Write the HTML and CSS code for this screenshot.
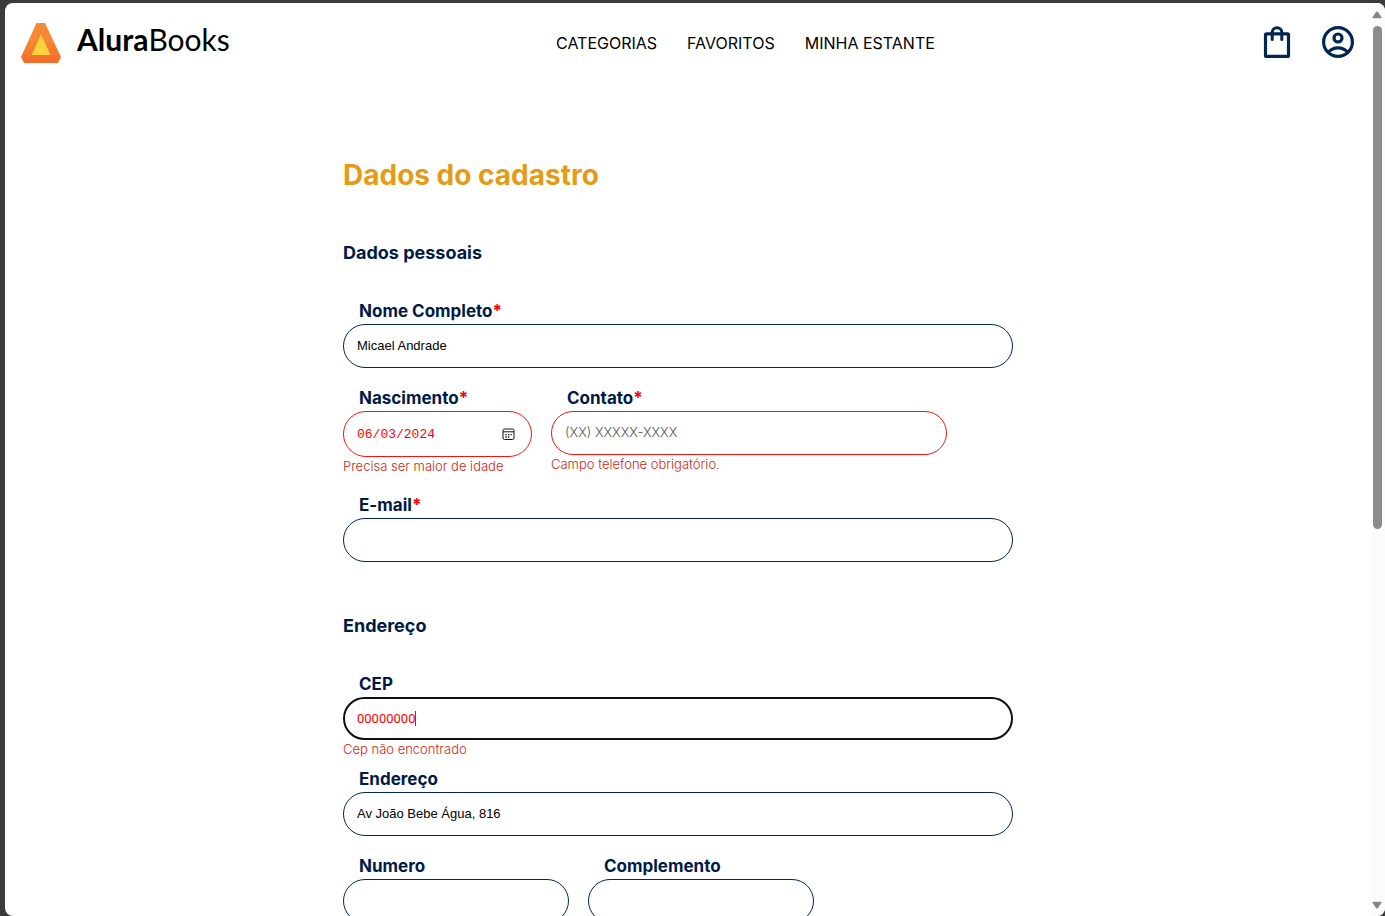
FILE: index.html
```html
<!DOCTYPE html>
<html lang="pt-BR">
<head>
<meta charset="utf-8">
<meta name="viewport" content="width=device-width, initial-scale=1">
<title>AluraBooks</title>
<link rel="stylesheet" href="styles.css">
</head>
<body>
<div class="window">
  <div class="page">
    <header class="header">
      <a class="logo" href="#">
        <svg class="logo-mark" viewBox="0 0 40 40" aria-hidden="true">
          <defs>
            <linearGradient id="flame" x1="0" y1="0" x2="0" y2="1">
              <stop offset="0.4" stop-color="#f68a34"/>
              <stop offset="1" stop-color="#f56a2a"/>
            </linearGradient>
          </defs>
          <path d="M15.500 0h8.500L40 34l-3 6H3l-3-6z" fill="url(#flame)"/>
          <path d="M20 11.500 29.500 32h-19z" fill="#fad23c"/>
        </svg>
        <span class="logo-text"><b>Alura</b>Books</span>
      </a>
      <nav class="nav">
        <a href="#">CATEGORIAS</a>
        <a href="#">FAVORITOS</a>
        <a href="#">MINHA ESTANTE</a>
      </nav>
      <div class="actions">
        <button type="button" class="icon-button" aria-label="Sacola">
          <svg viewBox="0 0 32 32" fill="none" stroke="#002652" stroke-width="3.200" stroke-linejoin="round" stroke-linecap="round">
            <rect x="4.500" y="7.800" width="23" height="22.600" rx="1"/>
            <path d="M11.200 13.500V6.500a4.800 4.800 0 0 1 9.600 0v7" stroke-width="3"/>
          </svg>
        </button>
        <button type="button" class="icon-button" aria-label="Minha conta">
          <svg viewBox="0 0 32 32" fill="none" stroke="#002652" stroke-width="3.200">
            <circle cx="16" cy="16" r="14.400"/>
            <circle cx="16" cy="12" r="4"/>
            <path d="M6.500 26c5-5.600 14-5.600 19 0"/>
          </svg>
        </button>
      </div>
    </header>

    <main class="main">
      <form class="form">
        <h1 class="title">Dados do cadastro</h1>

        <h2 class="section-title">Dados pessoais</h2>
        <div class="row">
          <div class="field grow">
            <label for="nome">Nome Completo<span class="required">*</span></label>
            <input class="box" id="nome" type="text" value="Micael Andrade">
          </div>
        </div>
        <div class="row">
          <div class="field birth">
            <label for="nascimento">Nascimento<span class="required">*</span></label>
            <div class="box box-date">
              <input class="bare date" id="nascimento" type="text" inputmode="numeric" value="06/03/2024">
              <button type="button" class="calendar" aria-label="Abrir calendário">
                <svg viewBox="0 0 13 13" fill="none" stroke="#111">
                  <rect x="1" y="1" width="11" height="10.500" rx="1.500"/>
                  <path d="M1 3.800h11"/>
                  <path d="M6 6.700h1.300M8.500 6.700h1.300M3.400 6.700h1.300M3.400 9h1.300M6 9h1.300" stroke-width="1.300"/>
                </svg>
              </button>
            </div>
            <span class="error">Precisa ser maior de idade</span>
          </div>
          <div class="field phone">
            <label for="contato">Contato<span class="required">*</span></label>
            <input class="box box-invalid" id="contato" type="tel" placeholder="(XX) XXXXX-XXXX">
            <span class="error">Campo telefone obrigatório.</span>
          </div>
        </div>
        <div class="row">
          <div class="field grow">
            <label for="email">E-mail<span class="required">*</span></label>
            <input class="box" id="email" type="email">
          </div>
        </div>

        <h2 class="section-title section-next">Endereço</h2>
        <div class="row row-tight">
          <div class="field grow">
            <label for="cep">CEP</label>
            <div class="box box-focus">
              <input class="bare cep" id="cep" type="text" inputmode="numeric" value="00000000"><span class="caret"></span>
            </div>
            <span class="error">Cep não encontrado</span>
          </div>
        </div>
        <div class="row">
          <div class="field grow">
            <label for="endereco">Endereço</label>
            <input class="box" id="endereco" type="text" value="Av João Bebe Água, 816">
          </div>
        </div>
        <div class="row">
          <div class="field short">
            <label for="numero">Numero</label>
            <input class="box" id="numero" type="text">
          </div>
          <div class="field short">
            <label for="complemento">Complemento</label>
            <input class="box" id="complemento" type="text">
          </div>
        </div>
      </form>
    </main>
  </div>
  <div class="scrollbar" aria-hidden="true">
    <svg class="arrow" viewBox="0 0 10 8"><path d="M4.200.8 0.500 6.200q-.3 1 .6 1h7.800q.9 0 .6-1L5.800.8q-.8-.8-1.600 0z"/></svg>
    <div class="track"><div class="thumb"></div></div>
    <svg class="arrow" viewBox="0 0 10 8"><path d="M4.200 7.200.5 1.800q-.3-1 .6-1h7.800q.9 0 .6 1L5.800 7.200q-.8.8-1.600 0z"/></svg>
  </div>
</div>
</body>
</html>
```
FILE: styles.css
```css
* {
  box-sizing: border-box;
}

body {
  margin: 0;
  height: 100vh;
  padding: 3px 0 0 5px;
  background: #3b3b3b;
  color: #000;
  font-family: "Inter", sans-serif;
  font-size: 16px;
  line-height: 24px;
  overflow: hidden;
}

.window {
  display: flex;
  height: 100%;
  border-radius: 8px;
  background: #fff;
  overflow: hidden;
}

.page {
  flex: 1;
  min-width: 0;
  overflow: hidden;
}

.header {
  display: flex;
  align-items: center;
  justify-content: space-between;
  height: 80px;
  padding: 0 17px 0 16px;
}

.logo {
  display: flex;
  align-items: center;
  gap: 16px;
  color: #000;
  text-decoration: none;
}

.logo-mark {
  width: 40px;
  height: 40px;
}

.logo-text {
  padding-bottom: 8px;
  font-family: "Lato", sans-serif;
  font-size: 30px;
  line-height: 32px;
}

.nav {
  display: flex;
  gap: 30px;
}

.nav a {
  color: #000;
  text-decoration: none;
  white-space: nowrap;
}

.actions {
  display: flex;
  gap: 29px;
  padding-bottom: 2px;
}

.icon-button {
  width: 32px;
  height: 32px;
  padding: 0;
  border: 0;
  background: none;
}

.icon-button svg {
  display: block;
}

.main {
  display: flex;
  justify-content: center;
  padding-top: 73px;
}

.form {
  width: 690px;
  max-width: 100%;
  padding-right: 20px;
}

.title {
  margin: 0 0 46px;
  color: #e69b16;
  font-size: 28px;
  line-height: 39px;
  font-weight: 700;
}

.section-title {
  margin: 0 0 35px;
  color: #001a48;
  font-size: 18px;
  line-height: 24px;
  font-weight: 700;
}

.section-next {
  padding-top: 33px;
}

.row {
  display: flex;
  align-items: flex-start;
  gap: 19px;
  margin-bottom: 19px;
}

.row-tight {
  margin-bottom: 10px;
}

.field {
  display: flex;
  flex-direction: column;
}

.grow {
  flex: 1;
}

.birth {
  width: 189px;
}

.phone {
  width: 396px;
}

.short {
  width: 226px;
}

.field label {
  padding: 0 0 2px 16px;
  color: #001a48;
  font-size: 17px;
  line-height: 22px;
  font-weight: 700;
}

.required {
  color: #f00;
}

.box {
  display: flex;
  align-items: center;
  width: 100%;
  height: 44px;
  padding: 0 13px 2px;
  border: 1px solid #002652;
  border-radius: 24px;
  outline: 0;
  background: #fff;
  color: #000;
  font-family: "Liberation Sans", Arial, sans-serif;
  font-size: 13px;
}

.box-invalid {
  border-color: #f2150b;
}

.box-invalid::placeholder {
  color: #555;
  font-family: "Inter", sans-serif;
  font-weight: 300;
}

.box-date {
  justify-content: space-between;
  height: 46px;
  padding: 0 16px 0 13px;
  border-color: #f2150b;
}

.box-focus {
  height: 43px;
  padding: 0 12px 1px;
  border: 2px solid #101010;
}

.bare {
  padding: 0;
  border: 0;
  outline: 0;
  background: none;
  color: #f00;
}

.date {
  width: 110px;
  font-family: "Liberation Mono", monospace;
  font-size: 13px;
}

.cep {
  field-sizing: content;
  font-family: "Roboto", Arial, sans-serif;
  font-size: 13px;
}

.caret {
  width: 1px;
  height: 15px;
  background: #f00;
}

.calendar {
  width: 13px;
  height: 13px;
  padding: 0;
  border: 0;
  background: none;
}

.calendar svg {
  display: block;
}

.error {
  color: #cf1f12;
  font-size: 13px;
  line-height: 18px;
  font-weight: 300;
}

.scrollbar {
  display: flex;
  flex-direction: column;
  align-items: center;
  gap: 7px;
  width: 14px;
  padding: 8px 2px 7px 0;
  background: #fcfcfc;
}

.arrow {
  width: 10px;
  height: 8px;
  fill: #858585;
}

.track {
  flex: 1;
  width: 9px;
}

.thumb {
  height: 58%;
  border-radius: 5px;
  background: #8b8b8b;
}
```
